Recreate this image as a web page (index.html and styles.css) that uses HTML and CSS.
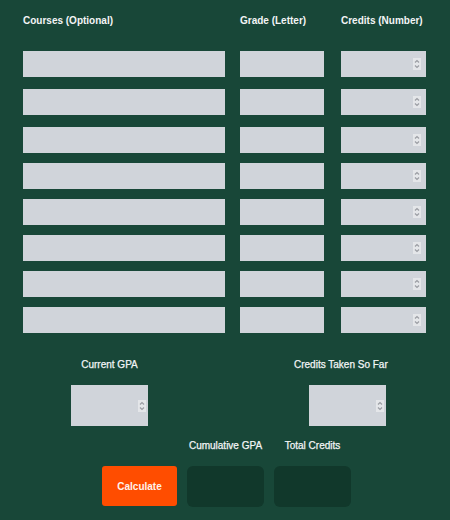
FILE: index.html
```html
<!DOCTYPE html>
<html>
<head>
<meta charset="utf-8">
<link rel="stylesheet" href="styles.css">
</head>
<body>
<div class="page">
  <div class="grid-head">
    <div class="label">Courses (Optional)</div>
    <div class="label">Grade (Letter)</div>
    <div class="label">Credits (Number)</div>
  </div>
  <div class="rows">
    <div class="row"><input class="field" type="text"><input class="field" type="text"><span class="num"><input class="field" type="number"><span class="spin"><svg viewBox="0 0 8 12" width="8" height="12"><path d="M2 4.5 L4 2.5 L6 4.5 M2 7.5 L4 9.5 L6 7.5" fill="none" stroke="#9a9da3" stroke-width="1.2"/></svg></span></span></div>
    <div class="row"><input class="field" type="text"><input class="field" type="text"><span class="num"><input class="field" type="number"><span class="spin"><svg viewBox="0 0 8 12" width="8" height="12"><path d="M2 4.5 L4 2.5 L6 4.5 M2 7.5 L4 9.5 L6 7.5" fill="none" stroke="#9a9da3" stroke-width="1.2"/></svg></span></span></div>
    <div class="row"><input class="field" type="text"><input class="field" type="text"><span class="num"><input class="field" type="number"><span class="spin"><svg viewBox="0 0 8 12" width="8" height="12"><path d="M2 4.5 L4 2.5 L6 4.5 M2 7.5 L4 9.5 L6 7.5" fill="none" stroke="#9a9da3" stroke-width="1.2"/></svg></span></span></div>
    <div class="row"><input class="field" type="text"><input class="field" type="text"><span class="num"><input class="field" type="number"><span class="spin"><svg viewBox="0 0 8 12" width="8" height="12"><path d="M2 4.5 L4 2.5 L6 4.5 M2 7.5 L4 9.5 L6 7.5" fill="none" stroke="#9a9da3" stroke-width="1.2"/></svg></span></span></div>
    <div class="row"><input class="field" type="text"><input class="field" type="text"><span class="num"><input class="field" type="number"><span class="spin"><svg viewBox="0 0 8 12" width="8" height="12"><path d="M2 4.5 L4 2.5 L6 4.5 M2 7.5 L4 9.5 L6 7.5" fill="none" stroke="#9a9da3" stroke-width="1.2"/></svg></span></span></div>
    <div class="row"><input class="field" type="text"><input class="field" type="text"><span class="num"><input class="field" type="number"><span class="spin"><svg viewBox="0 0 8 12" width="8" height="12"><path d="M2 4.5 L4 2.5 L6 4.5 M2 7.5 L4 9.5 L6 7.5" fill="none" stroke="#9a9da3" stroke-width="1.2"/></svg></span></span></div>
    <div class="row"><input class="field" type="text"><input class="field" type="text"><span class="num"><input class="field" type="number"><span class="spin"><svg viewBox="0 0 8 12" width="8" height="12"><path d="M2 4.5 L4 2.5 L6 4.5 M2 7.5 L4 9.5 L6 7.5" fill="none" stroke="#9a9da3" stroke-width="1.2"/></svg></span></span></div>
    <div class="row"><input class="field" type="text"><input class="field" type="text"><span class="num"><input class="field" type="number"><span class="spin"><svg viewBox="0 0 8 12" width="8" height="12"><path d="M2 4.5 L4 2.5 L6 4.5 M2 7.5 L4 9.5 L6 7.5" fill="none" stroke="#9a9da3" stroke-width="1.2"/></svg></span></span></div>
  </div>
  <div class="current">
    <div class="group g1">
      <div class="label light">Current GPA</div>
      <span class="num big"><input class="field" type="number"><span class="spin"><svg viewBox="0 0 8 12" width="8" height="12"><path d="M2 4.5 L4 2.5 L6 4.5 M2 7.5 L4 9.5 L6 7.5" fill="none" stroke="#9a9da3" stroke-width="1.2"/></svg></span></span>
    </div>
    <div class="group g2">
      <div class="label light">Credits Taken So Far</div>
      <span class="num big"><input class="field" type="number"><span class="spin"><svg viewBox="0 0 8 12" width="8" height="12"><path d="M2 4.5 L4 2.5 L6 4.5 M2 7.5 L4 9.5 L6 7.5" fill="none" stroke="#9a9da3" stroke-width="1.2"/></svg></span></span>
    </div>
  </div>
  <div class="results">
    <button class="calc">Calculate</button>
    <div class="rgroup">
      <div class="label light">Cumulative GPA</div>
      <div class="rbox"></div>
    </div>
    <div class="rgroup">
      <div class="label light">Total Credits</div>
      <div class="rbox"></div>
    </div>
  </div>
</div>
</body>
</html>
```
FILE: styles.css
```css
html, body {
  margin: 0;
  padding: 0;
  background: #184738;
}
body {
  width: 450px;
  height: 520px;
  font-family: "Liberation Sans", Arial, sans-serif;
}
.page {
  padding: 15px 22px 0 23px;
}
.label {
  color: #f3f5f6;
  font-size: 10px;
  font-weight: bold;
  line-height: 12px;
  white-space: nowrap;
}
.label.light {
  font-weight: normal;
  -webkit-text-stroke: 0.25px #f3f5f6;
}
.grid-head, .row {
  display: grid;
  grid-template-columns: 202px 84px 87px;
  column-gap: 15px;
}
.grid-head > :nth-child(3), .row > :nth-child(3) {
  margin-left: 2px;
}
.grid-head {
  height: 36px;
}
.rows {
  display: flex;
  flex-direction: column;
  gap: 10px;
}
.rows .row:nth-child(2), .rows .row:nth-child(3) {
  margin-top: 2px;
}
.field {
  display: block;
  box-sizing: border-box;
  height: 26px;
  width: 100%;
  margin: 0;
  border: none;
  border-radius: 0;
  background: #d0d4da;
  padding: 0 4px;
  font-size: 10px;
  outline: none;
  -moz-appearance: textfield;
}
.field::-webkit-inner-spin-button,
.field::-webkit-outer-spin-button {
  -webkit-appearance: none;
  margin: 0;
}
.num {
  position: relative;
  display: block;
}
.spin {
  position: absolute;
  right: 5px;
  top: 50%;
  width: 8px;
  height: 12px;
  margin-top: -6px;
  background: #e4e6e9;
  display: flex;
}
.current {
  display: flex;
  margin-top: 26px;
  padding-left: 48px;
}
.group {
  display: flex;
  flex-direction: column;
}
.g1 {
  width: 77px;
  align-items: center;
}
.g2 {
  margin-left: 146px;
  width: 94px;
}
.g2 .num {
  margin-left: 15px;
}
.group .label {
  margin-bottom: 14px;
}
.num.big {
  width: 77px;
}
.num.big .field {
  height: 41px;
}
.num.big .spin {
  right: 2px;
}
.results {
  display: flex;
  align-items: flex-end;
  gap: 10px;
  margin-top: 14px;
  padding-left: 79px;
}
.calc {
  width: 75px;
  height: 40px;
  margin-bottom: 1px;
  border: none;
  border-radius: 3px;
  background: #ff4d00;
  color: #fff2ec;
  font-family: "Liberation Sans", Arial, sans-serif;
  font-size: 10px;
  font-weight: bold;
  padding: 0;
}
.rgroup {
  display: flex;
  flex-direction: column;
  align-items: center;
  width: 77px;
}
.rgroup .label {
  margin-bottom: 14px;
}
.rbox {
  width: 77px;
  height: 41px;
  border-radius: 6px;
  background: #11382b;
}
```
